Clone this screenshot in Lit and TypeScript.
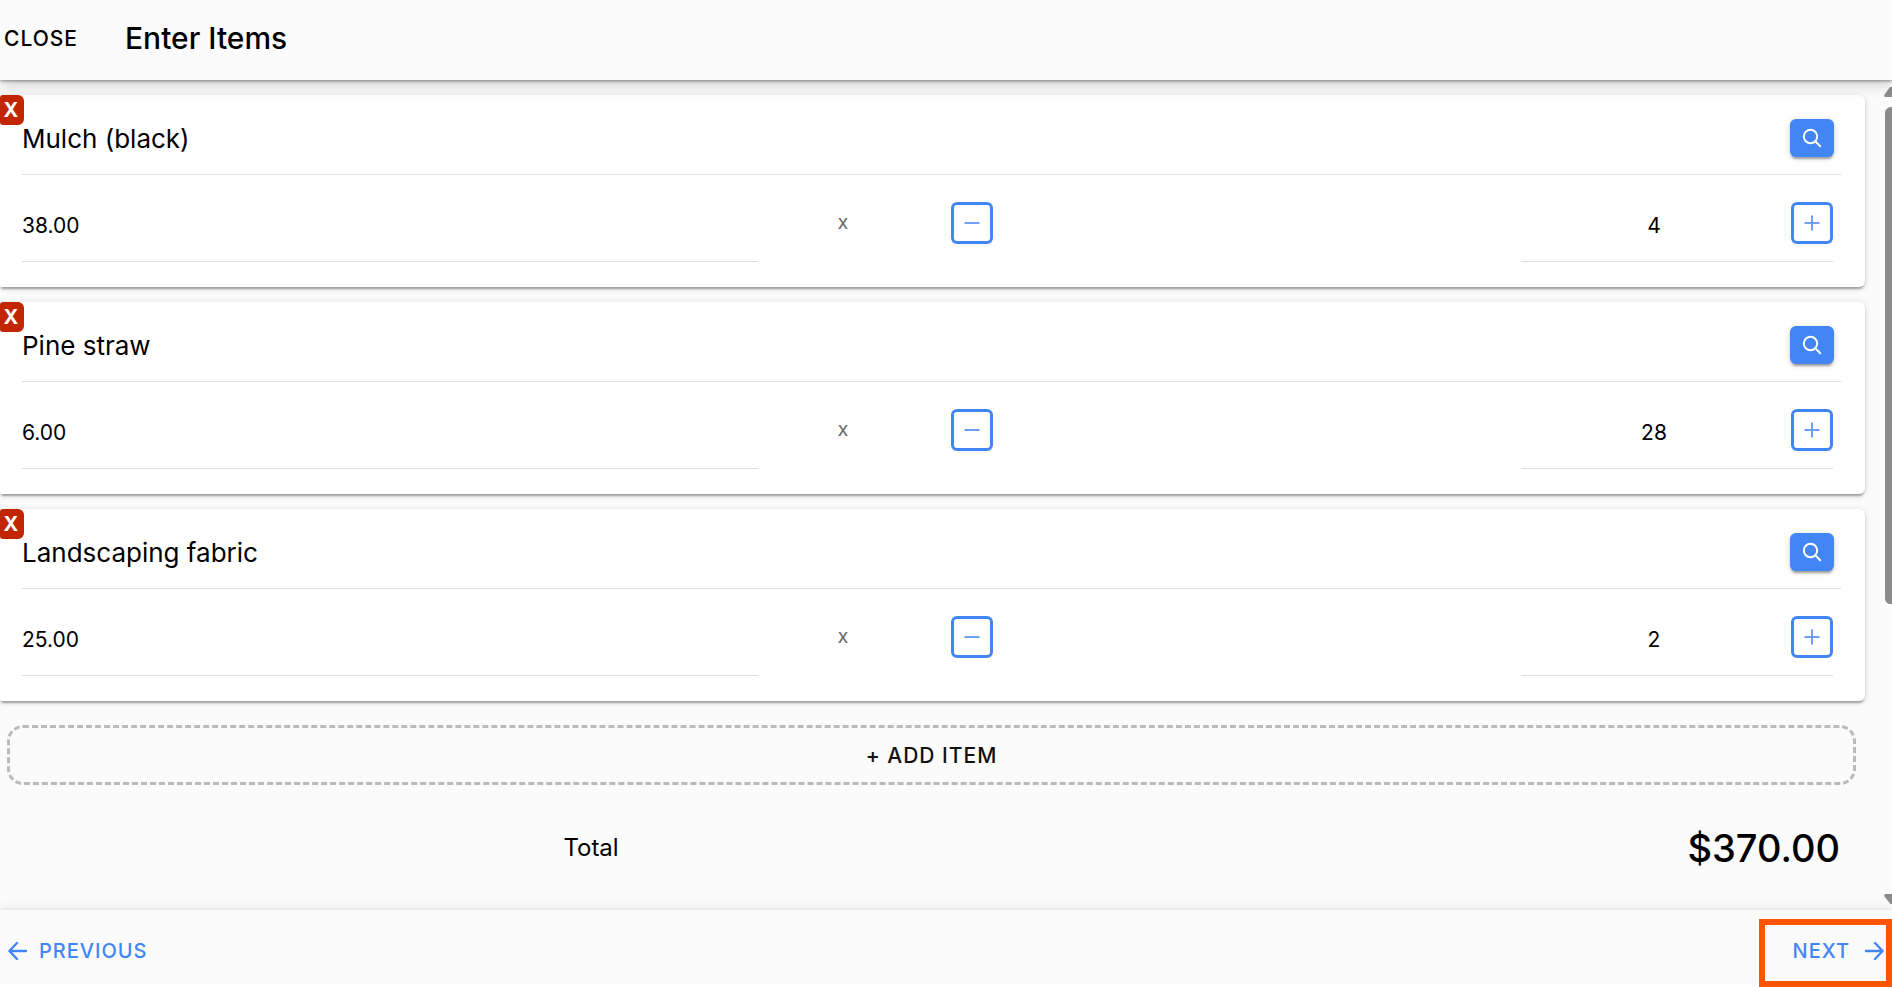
import { LitElement, html, css } from "lit";
import { customElement, property, state } from "lit/decorators.js";

interface Item {
  id: number;
  name: string;
  price: number;
  qty: number;
}

const shared = css`
  * {
    box-sizing: border-box;
  }
  button,
  input {
    font: inherit;
    color: inherit;
    margin: 0;
    padding: 0;
    border: 0;
    border-radius: 0;
    background: none;
    outline: none;
    min-width: 0;
  }
  button {
    cursor: pointer;
  }
  svg {
    display: block;
    fill: none;
    stroke: currentColor;
  }
`;

@customElement("item-card")
export class ItemCard extends LitElement {
  @property({ attribute: false }) item!: Item;

  static styles = [
    shared,
    css`
      :host {
        display: block;
        position: relative;
        height: 192px;
        padding: 0 24px 0 22px;
        background: #fff;
        border-radius: 2px 6px 6px 2px;
        box-shadow: 0 4px 2px -2px rgba(0, 0, 0, 0.2),
          0 2px 3px 0 rgba(0, 0, 0, 0.16), 0 1px 7px 0 rgba(0, 0, 0, 0.12);
      }
      .remove {
        position: absolute;
        left: 0;
        top: 0;
        width: 24px;
        height: 30px;
        padding-right: 2px;
        border-radius: 3px 6px 6px 3px;
        background: #c22600;
        color: #fff;
        font-size: 20px;
        line-height: 28px;
        font-weight: 700;
      }
      .head {
        display: flex;
        align-items: center;
        height: 80px;
        padding: 6px 7px 0 0;
        border-bottom: 1px solid #dedede;
      }
      .name {
        flex: 1;
        height: 40px;
        padding-top: 2px;
        font-size: 26px;
      }
      .search {
        display: grid;
        place-items: center;
        width: 44px;
        height: 38px;
        border-radius: 6px;
        background: #4286f5;
        color: #fff;
        box-shadow: 0 4px 2px -2px rgba(0, 0, 0, 0.2),
          0 2px 3px 0 rgba(0, 0, 0, 0.16), 0 1px 7px 0 rgba(0, 0, 0, 0.12);
      }
      .row {
        display: grid;
        grid-template-columns:
          minmax(0, 736fr) minmax(0, 170fr) minmax(0, 593fr)
          minmax(0, 312fr);
        height: 87px;
        padding-right: 8px;
      }
      .price,
      .amount {
        border-bottom: 1px solid #dedede;
      }
      .price {
        width: 100%;
        padding-top: 14px;
        font-size: 21px;
      }
      .times {
        place-self: center;
        padding-top: 6px;
        color: #6b6b6b;
        font-size: 20px;
        line-height: 24px;
      }
      .less {
        display: flex;
        align-items: center;
        padding: 10px 0 2px 23px;
      }
      .amount {
        display: flex;
        align-items: center;
        padding-top: 9px;
      }
      .qty {
        flex: 1;
        align-self: stretch;
        padding: 5px 4px 0 0;
        text-align: center;
        font-size: 21px;
      }
      .step {
        display: grid;
        place-items: center;
        flex: none;
        width: 42px;
        height: 42px;
        border: 3px solid #4286f5;
        border-radius: 6px;
        color: #6f9ff7;
      }
    `,
  ];

  private change(delta: number) {
    this.dispatchEvent(
      new CustomEvent("quantity", {
        detail: Math.max(0, this.item.qty + delta),
      })
    );
  }

  render() {
    const { name, price, qty } = this.item;
    return html`
      <button class="remove" aria-label="Remove ${name}"
        @click=${() => this.dispatchEvent(new CustomEvent("remove"))}>X</button>
      <div class="head">
        <input class="name" aria-label="Item name" .value=${name} />
        <button class="search" aria-label="Search items">
          <svg width="20" height="20" viewBox="0 0 20 20" stroke-width="2" stroke-linecap="round">
            <circle cx="8.5" cy="8.5" r="6.7" />
            <path d="M13.4 13.4L18.2 18.2" />
          </svg>
        </button>
      </div>
      <div class="row">
        <input class="price" aria-label="Price" inputmode="decimal" .value=${price.toFixed(2)} />
        <span class="times">x</span>
        <div class="less">
          <button class="step" aria-label="Decrease quantity" @click=${() => this.change(-1)}>
            <svg width="16" height="16" viewBox="0 0 16 16" stroke-width="2">
              <path d="M0.5 8H15.5" />
            </svg>
          </button>
        </div>
        <div class="amount">
          <input class="qty" aria-label="Quantity" inputmode="numeric" .value=${String(qty)} />
          <button class="step" aria-label="Increase quantity" @click=${() => this.change(1)}>
            <svg width="16" height="16" viewBox="0 0 16 16" stroke-width="2">
              <path d="M0.5 8H15.5M8 0.5V15.5" />
            </svg>
          </button>
        </div>
      </div>
    `;
  }
}

@customElement("app-root")
export class AppRoot extends LitElement {
  @state() private items: Item[] = [
    { id: 1, name: "Mulch (black)", price: 38, qty: 4 },
    { id: 2, name: "Pine straw", price: 6, qty: 28 },
    { id: 3, name: "Landscaping fabric", price: 25, qty: 2 },
  ];
  private nextId = 4;

  static styles = [
    shared,
    css`
      :host {
        display: flex;
        flex-direction: column;
        height: 100vh;
        padding-bottom: 4px;
        overflow: hidden;
        box-sizing: border-box;
        background: #fff;
        color: #000;
        font-family: Inter, sans-serif;
      }
      .header {
        display: flex;
        align-items: center;
        gap: 47px;
        flex: none;
        height: 80px;
        padding: 0 4px 4px;
        background: #fbfbfb;
        position: relative;
        z-index: 1;
        box-shadow: 0 1px 3px rgba(0, 0, 0, 0.4), 0 4px 14px rgba(0, 0, 0, 0.2);
      }
      .close {
        padding-top: 2px;
        font-size: 21px;
        line-height: 28px;
        font-weight: 500;
        letter-spacing: 1px;
      }
      .title {
        margin: 0;
        font-size: 30px;
        line-height: 40px;
        font-weight: 500;
      }
      .body {
        display: flex;
        flex: 1;
        min-height: 0;
        background: #fbfbfb;
      }
      .content {
        flex: 1;
        min-width: 0;
        padding: 15px 19px 0 0;
        overflow: hidden;
      }
      .list {
        display: grid;
        gap: 15px;
      }
      .add {
        display: block;
        width: calc(100% - 16px);
        height: 60px;
        margin: 24px 0 0 7px;
        border: 3px dashed #bababe;
        border-radius: 16px;
        color: #111;
        font-size: 21px;
        font-weight: 500;
        letter-spacing: 1px;
      }
      .total {
        display: grid;
        grid-template-columns: 1fr 2fr;
        align-items: center;
        height: 125px;
        padding: 0 25px 0 8px;
        text-align: right;
      }
      .label {
        font-size: 24px;
        line-height: 32px;
      }
      .sum {
        font-size: 38px;
        line-height: 48px;
        font-weight: 500;
      }
      .rail {
        display: flex;
        flex-direction: column;
        gap: 10px;
        flex: none;
        width: 8px;
        padding: 7px 0 6px;
        overflow: hidden;
        color: #8b8b8b;
      }
      .arrow {
        flex: none;
        stroke: none;
        fill: currentColor;
      }
      .track {
        flex: 1;
        padding-left: 1px;
      }
      .footer {
        display: flex;
        justify-content: space-between;
        align-items: center;
        flex: none;
        height: 73px;
        padding: 9px 0 0 8px;
        background: #fbfbfb;
        color: #4286f5;
        position: relative;
        box-shadow: 0 -1px 3px rgba(0, 0, 0, 0.08), 0 -3px 10px rgba(0, 0, 0, 0.05);
      }
      .nav {
        display: flex;
        align-items: center;
        gap: 11px;
        font-size: 20px;
        line-height: 28px;
        font-weight: 500;
        letter-spacing: 1px;
      }
      .next {
        position: absolute;
        right: 0;
        top: 9px;
        gap: 14px;
        width: 133px;
        height: 68px;
        padding: 0 2px 4px 0;
        justify-content: flex-end;
        border: 6px solid #ff5500;
      }
    `,
  ];

  private setQty(id: number, qty: number) {
    this.items = this.items.map((i) => (i.id === id ? { ...i, qty } : i));
  }

  private remove(id: number) {
    this.items = this.items.filter((i) => i.id !== id);
  }

  private add() {
    this.items = [...this.items, { id: this.nextId++, name: "", price: 0, qty: 1 }];
  }

  render() {
    const total = this.items.reduce((sum, i) => sum + i.price * i.qty, 0);
    return html`
      <header class="header">
        <button class="close">CLOSE</button>
        <h1 class="title">Enter Items</h1>
      </header>
      <main class="body">
        <div class="content">
          <div class="list">
            ${this.items.map(
              (item) => html`<item-card
                .item=${item}
                @quantity=${(e: CustomEvent<number>) => this.setQty(item.id, e.detail)}
                @remove=${() => this.remove(item.id)}
              ></item-card>`
            )}
          </div>
          <button class="add" @click=${this.add}>+ ADD ITEM</button>
          <div class="total">
            <span class="label">Total</span>
            <output class="sum">$${total.toFixed(2)}</output>
          </div>
        </div>
        <div class="rail" aria-hidden="true">
          <svg class="arrow" width="8" height="10" viewBox="0 0 8 10">
            <path d="M6 0H8V10H2Q-0.5 10 0.5 7.5Z" />
          </svg>
          <div class="track">
            <svg class="arrow" width="7" height="64%">
              <rect width="14" height="100%" rx="6" />
            </svg>
          </div>
          <svg class="arrow" width="8" height="10" viewBox="0 0 8 10">
            <path d="M2 0H8V10H6.5L0.5 2.5Q-0.5 0 2 0Z" />
          </svg>
        </div>
      </main>
      <footer class="footer">
        <button class="nav previous">
          <svg width="20" height="20" viewBox="0 0 20 20" stroke-width="2.4" stroke-linecap="round" stroke-linejoin="round">
            <path d="M9 2L1.4 10L9 18M1.6 10H18" />
          </svg>
          PREVIOUS
        </button>
        <button class="nav next">
          NEXT
          <svg width="20" height="20" viewBox="0 0 20 20" stroke-width="2.4" stroke-linecap="round" stroke-linejoin="round">
            <path d="M11 2L18.6 10L11 18M18.4 10H2" />
          </svg>
        </button>
      </footer>
    `;
  }
}
